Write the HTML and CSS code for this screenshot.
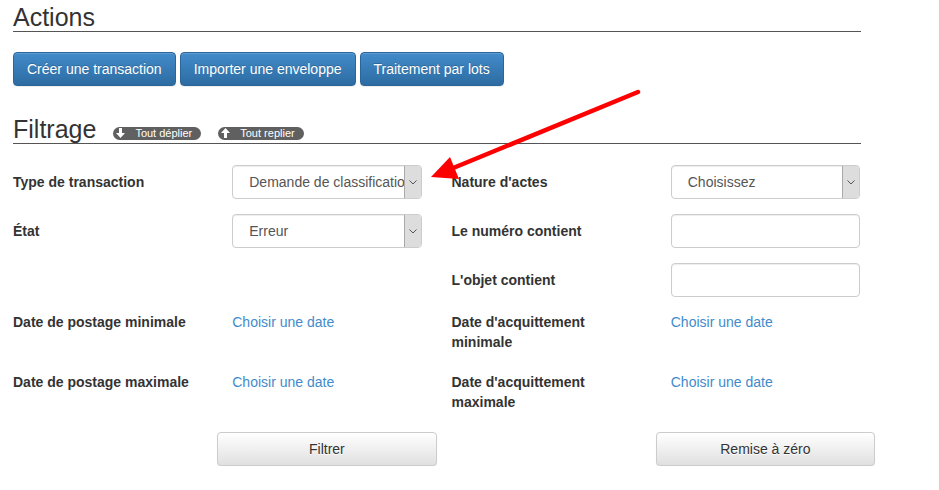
FILE: index.html
```html
<!DOCTYPE html>
<html lang="fr">
<head>
<meta charset="utf-8">
<title>Transactions</title>
<link rel="stylesheet" href="styles.css">
</head>
<body>
<div class="page">
  <h3 class="section-title">Actions</h3>
  <div class="actions">
    <button type="button" class="btn btn-primary">Créer une transaction</button>
    <button type="button" class="btn btn-primary">Importer une enveloppe</button>
    <button type="button" class="btn btn-primary">Traitement par lots</button>
  </div>

  <h3 class="section-title filter-title">Filtrage<span class="toggle"><svg class="toggle-icon" viewBox="0 0 9 10" width="9" height="10"><path d="M3 0h3v5h3L4.5 10 0 5h3z" fill="#fff"/></svg>Tout déplier</span><span class="toggle toggle-up"><svg class="toggle-icon" viewBox="0 0 9 10" width="9" height="10"><path d="M3 10h3V5h3L4.5 0 0 5h3z" fill="#fff"/></svg>Tout replier</span></h3>

  <form class="filters">
    <div class="form-row">
      <label class="field-label">Type de transaction</label>
      <div class="field">
        <div class="select"><span class="select-value">Demande de classification</span><span class="select-arrow"><svg viewBox="0 0 8 5" width="8" height="5"><path d="M0.5 0.5L4 4L7.5 0.5" fill="none" stroke="#555" stroke-width="1"/></svg></span></div>
      </div>
      <label class="field-label">Nature d'actes</label>
      <div class="field">
        <div class="select"><span class="select-value">Choisissez</span><span class="select-arrow"><svg viewBox="0 0 8 5" width="8" height="5"><path d="M0.5 0.5L4 4L7.5 0.5" fill="none" stroke="#555" stroke-width="1"/></svg></span></div>
      </div>
    </div>

    <div class="form-row">
      <label class="field-label">État</label>
      <div class="field">
        <div class="select"><span class="select-value">Erreur</span><span class="select-arrow"><svg viewBox="0 0 8 5" width="8" height="5"><path d="M0.5 0.5L4 4L7.5 0.5" fill="none" stroke="#555" stroke-width="1"/></svg></span></div>
      </div>
      <label class="field-label">Le numéro contient</label>
      <div class="field"><input class="input" type="text"></div>
    </div>

    <div class="form-row">
      <div class="field-label"></div>
      <div class="field"></div>
      <label class="field-label">L'objet contient</label>
      <div class="field"><input class="input" type="text"></div>
    </div>

    <div class="form-row date-row">
      <label class="field-label date-label">Date de postage minimale</label>
      <div class="field"><a class="date-link" href="#">Choisir une date</a></div>
      <label class="field-label date-label">Date d'acquittement minimale</label>
      <div class="field"><a class="date-link" href="#">Choisir une date</a></div>
    </div>

    <div class="form-row date-row">
      <label class="field-label date-label">Date de postage maximale</label>
      <div class="field"><a class="date-link" href="#">Choisir une date</a></div>
      <label class="field-label date-label">Date d'acquittement maximale</label>
      <div class="field"><a class="date-link" href="#">Choisir une date</a></div>
    </div>

    <div class="form-row submit-row">
      <div></div>
      <button type="submit" class="btn btn-default btn-block">Filtrer</button>
      <div></div>
      <button type="reset" class="btn btn-default btn-block">Remise à zéro</button>
    </div>
  </form>
</div>

<svg class="pointer" width="939" height="490" viewBox="0 0 939 490">
  <line x1="638" y1="92" x2="452" y2="168.5" stroke="#ff0000" stroke-width="4.5" stroke-linecap="round"/>
  <polygon points="431,177 450,157 459,179" fill="#ff0000"/>
</svg>
</body>
</html>
```

FILE: styles.css
```css
* {
  box-sizing: border-box;
}

body {
  margin: 0;
  font-family: "Liberation Sans", Arial, sans-serif;
  font-size: 14px;
  line-height: 20px;
  color: #333;
  background: #fff;
}

.page {
  padding-left: 13px;
  width: 861px;
}

.section-title {
  margin: 4px 0 0;
  font-size: 25px;
  font-weight: normal;
  line-height: 27px;
  color: #333;
  border-bottom: 1px solid #555;
}

.filter-title {
  margin-top: 30px;
}

/* action buttons */
.actions {
  display: flex;
  gap: 4px;
  margin-top: 20px;
}

.btn {
  display: inline-block;
  height: 34px;
  padding: 6px 13px;
  font-family: inherit;
  font-size: 14px;
  line-height: 20px;
  border: 1px solid transparent;
  border-radius: 4px;
  cursor: pointer;
  white-space: nowrap;
}

.btn-primary {
  color: #fff;
  background-image: linear-gradient(to bottom, #428bca 0, #2d6ca2 100%);
  border-color: #2b669a;
  text-shadow: 0 -1px 0 rgba(0, 0, 0, 0.2);
  box-shadow: inset 0 1px 0 rgba(255, 255, 255, 0.15), 0 1px 1px rgba(0, 0, 0, 0.075);
}

.btn-default {
  color: #333;
  background-image: linear-gradient(to bottom, #fff 0, #e0e0e0 100%);
  border-color: #ccc;
  text-shadow: 0 1px 0 #fff;
  box-shadow: inset 0 1px 0 rgba(255, 255, 255, 0.15), 0 1px 1px rgba(0, 0, 0, 0.075);
}

.btn-block {
  width: 100%;
}

/* expand / collapse pills */
.toggle {
  display: inline-flex;
  align-items: center;
  height: 13px;
  margin-left: 17px;
  padding: 0 9px 0 3px;
  font-size: 11px;
  line-height: 13px;
  color: #fff;
  background: #606060;
  border-radius: 7px;
  vertical-align: baseline;
}

.toggle-icon {
  display: block;
  margin-right: 10px;
}

/* filter grid */
.filters {
  margin-top: 21px;
  margin-left: -15px;
  width: 877px;
}

.form-row {
  display: grid;
  grid-template-columns: repeat(4, minmax(0, 1fr));
  margin-bottom: 15px;
}

.field-label {
  min-width: 0;
  padding: 7px 15px 0;
  font-weight: bold;
  line-height: 20px;
}

.field {
  min-width: 0;
  padding: 0 15px;
}

.select {
  display: flex;
  height: 34px;
  border: 1px solid #ccc;
  border-radius: 4px;
  overflow: hidden;
  background: #fff;
  box-shadow: inset 0 1px 1px rgba(0, 0, 0, 0.075);
}

.select-value {
  flex: 1;
  min-width: 0;
  padding: 6px 0 6px 16px;
  color: #555;
  white-space: nowrap;
  overflow: hidden;
}

.select-arrow {
  display: flex;
  align-items: center;
  justify-content: center;
  width: 17px;
  flex: none;
  background: #dddddd;
  border-left: 1px solid #a9a9a9;
}

.input {
  display: block;
  width: 100%;
  height: 34px;
  padding: 6px 12px;
  font: inherit;
  color: #555;
  background: #fff;
  border: 1px solid #ccc;
  border-radius: 4px;
  box-shadow: inset 0 1px 1px rgba(0, 0, 0, 0.075);
}

.date-row {
  margin-bottom: 20px;
  min-height: 40px;
}

.date-label {
  padding-top: 0;
}

.date-link {
  color: #428bca;
  text-decoration: none;
}

.submit-row {
  margin-bottom: 0;
}

/* red callout drawn over the form */
.pointer {
  position: absolute;
  top: 0;
  left: 0;
  pointer-events: none;
}
```
